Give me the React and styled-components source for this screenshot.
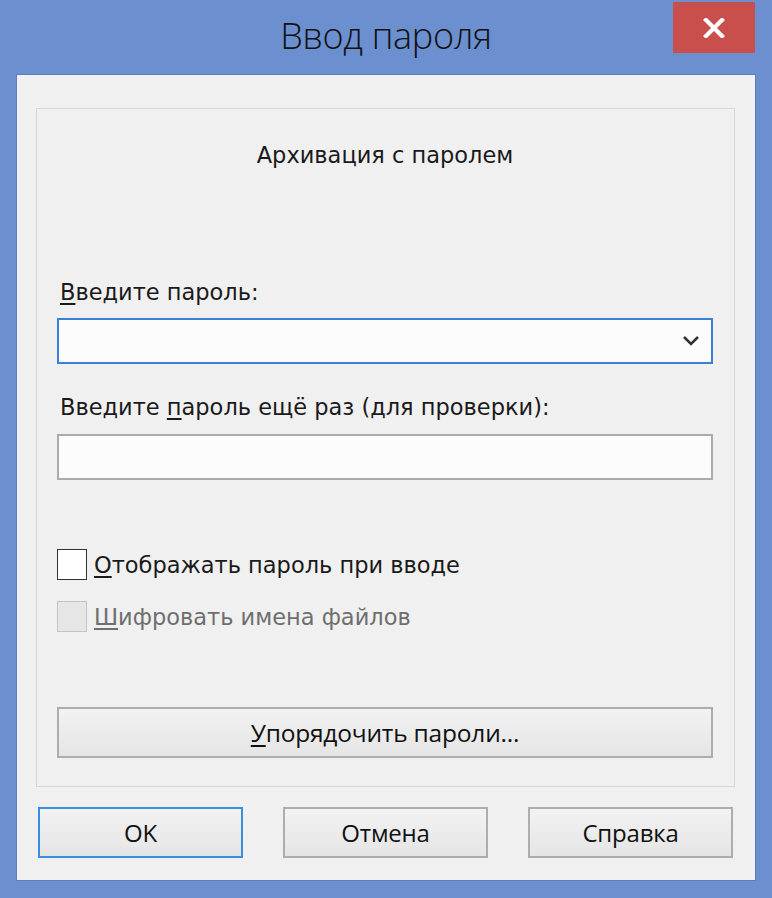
import React, { useState } from 'react';
import styled, { createGlobalStyle } from 'styled-components';

const GlobalStyle = createGlobalStyle`
  html, body {
    margin: 0;
    padding: 0;
    background: #6b8fcf;
  }
`;

const Window = styled.div`
  width: 772px;
  height: 898px;
  box-sizing: border-box;
  padding: 0 17px 18px;
  background: #6b8fcf;
  display: flex;
  flex-direction: column;
`;

const TitleBar = styled.div`
  height: 75px;
  display: grid;
  grid-template-columns: 1fr auto 1fr;
`;

const Title = styled.div`
  grid-column: 2;
  align-self: center;
  margin-top: -4px;
  font-family: 'Open Sans', 'Noto Sans', sans-serif;
  font-weight: 300;
  font-size: 36px;
  letter-spacing: -0.3px;
  color: #111;
`;

const CloseButton = styled.button`
  grid-column: 3;
  justify-self: end;
  align-self: start;
  margin-top: 2px;
  width: 82px;
  height: 51px;
  border: none;
  padding: 0;
  background: #c84f4c;
  display: flex;
  align-items: center;
  justify-content: center;
  cursor: pointer;
`;

const Client = styled.div`
  flex: 1;
  background: #f0f0f0;
  box-shadow: 0 0 0 1px #5b7dbd;
  padding: 33px 20px 0 19px;
  display: flex;
  flex-direction: column;
`;

const GroupBox = styled.div`
  height: 679px;
  box-sizing: border-box;
  border: 1px solid #d7d7d7;
  padding: 0 21px 0 20px;
  display: flex;
  flex-direction: column;
`;

const Caption = styled.div`
  margin-top: ${({ $top }) => $top}px;
  height: 30px;
  line-height: 30px;
  font-family: 'DejaVu Sans', Verdana, sans-serif;
  font-size: 22.5px;
  color: #1a1a1a;
  white-space: nowrap;
  text-align: ${({ $center }) => ($center ? 'center' : 'left')};
  padding-left: ${({ $center }) => ($center ? 0 : 3)}px;
`;

const Key = styled.span`
  text-decoration: underline;
  text-underline-offset: 3px;
`;

const Field = styled.div`
  margin-top: ${({ $top }) => $top}px;
  height: 46px;
  box-sizing: border-box;
  border: 2px solid ${({ $focus }) => ($focus ? '#3a80d4' : '#ababab')};
  background: #fcfcfc;
  display: flex;
  align-items: center;
`;

const FieldInput = styled.input`
  flex: 1;
  height: 100%;
  border: none;
  outline: none;
  background: transparent;
  font-family: 'DejaVu Sans', sans-serif;
  font-size: 20px;
  padding: 0 8px;
`;

const Chevron = styled.svg`
  width: 18px;
  height: 12px;
  margin-right: 11px;
  flex: none;
`;

const CheckRow = styled.label`
  margin-top: ${({ $top }) => $top}px;
  height: 31px;
  display: flex;
  align-items: center;
  gap: 7px;
  font-family: 'DejaVu Sans', Verdana, sans-serif;
  font-size: 22.5px;
  white-space: nowrap;
  color: ${({ $disabled }) => ($disabled ? '#6e6e6e' : '#1a1a1a')};
  cursor: ${({ $disabled }) => ($disabled ? 'default' : 'pointer')};
`;

const Box = styled.span`
  width: 30px;
  height: 31px;
  box-sizing: border-box;
  border: 1.5px solid ${({ $disabled }) => ($disabled ? '#c4c4c4' : '#333')};
  background: ${({ $disabled }) => ($disabled ? '#e6e6e6' : '#fff')};
  display: flex;
  align-items: center;
  justify-content: center;
  flex: none;
`;

const Button = styled.button`
  height: 51px;
  box-sizing: border-box;
  border: 2px solid ${({ $default }) => ($default ? '#3a8ddf' : '#adadad')};
  background: linear-gradient(#f2f2f2, #e5e5e5);
  font-family: 'Open Sans', 'Noto Sans', sans-serif;
  font-size: 24px;
  letter-spacing: -0.2px;
  color: #111;
  padding: 0;
  cursor: pointer;
`;

const WideButton = styled(Button)`
  margin-top: ${({ $top }) => $top}px;
  width: 100%;
  font-size: 24.5px;
`;

const Footer = styled.div`
  margin-top: 20px;
  padding: 0 2px;
  display: grid;
  grid-template-columns: repeat(3, 205px);
  justify-content: space-between;
`;

const App = () => {
  const [show, setShow] = useState(false);

  return (
    <>
      <GlobalStyle />
      <Window>
        <TitleBar>
          <Title>Ввод пароля</Title>
          <CloseButton aria-label="Закрыть">
            <svg width="22" height="20" viewBox="0 0 22 20">
              <path d="M3 2 L19 18 M19 2 L3 18" stroke="#fff" strokeWidth="4.2" strokeLinecap="square" />
            </svg>
          </CloseButton>
        </TitleBar>
        <Client>
          <GroupBox>
            <Caption $top={31} $center>Архивация с паролем</Caption>
            <Caption $top={107}>
              <Key>В</Key>ведите пароль:
            </Caption>
            <Field $top={11} $focus>
              <FieldInput type={show ? 'text' : 'password'} />
              <Chevron viewBox="0 0 18 12">
                <path d="M2 2 L9 9 L16 2" fill="none" stroke="#333" strokeWidth="2.6" />
              </Chevron>
            </Field>
            <Caption $top={28}>
              Введите <Key>п</Key>ароль ещё раз (для проверки):
            </Caption>
            <Field $top={12}>
              <FieldInput type={show ? 'text' : 'password'} />
            </Field>
            <CheckRow $top={69} onClick={() => setShow((v) => !v)}>
              <Box>
                {show && (
                  <svg width="20" height="18" viewBox="0 0 20 18">
                    <path d="M2 9 L8 15 L18 3" fill="none" stroke="#222" strokeWidth="2.5" />
                  </svg>
                )}
              </Box>
              <span>
                <Key>О</Key>тображать пароль при вводе
              </span>
            </CheckRow>
            <CheckRow $top={21} $disabled>
              <Box $disabled />
              <span>
                <Key>Ш</Key>ифровать имена файлов
              </span>
            </CheckRow>
            <WideButton $top={75}>
              <Key>У</Key>порядочить пароли...
            </WideButton>
          </GroupBox>
          <Footer>
            <Button $default>OK</Button>
            <Button>Отмена</Button>
            <Button>Справка</Button>
          </Footer>
        </Client>
      </Window>
    </>
  );
};

export default App;
